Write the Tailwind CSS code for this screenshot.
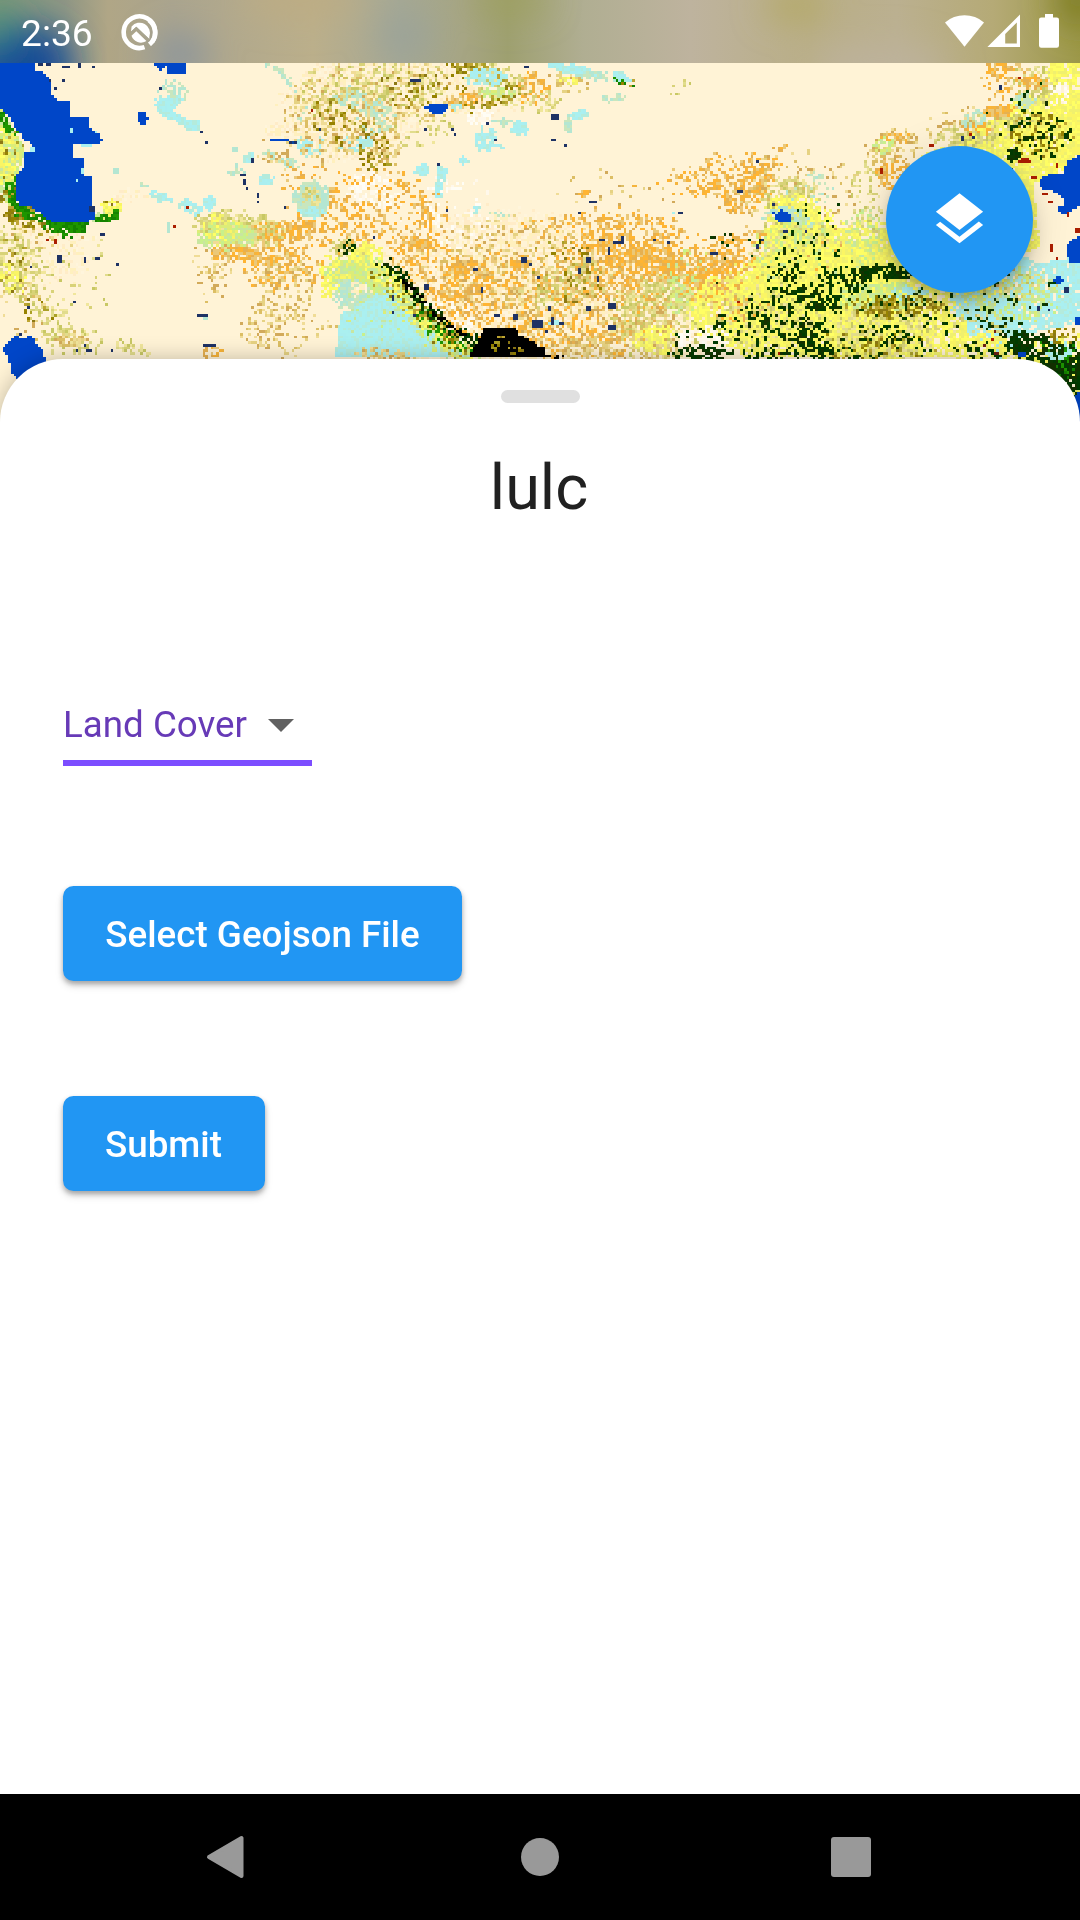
<!DOCTYPE html>
<html lang="en">
<head>
<meta charset="utf-8">
<title>lulc</title>
<script src="https://cdn.jsdelivr.net/npm/@tailwindcss/browser@4"></script>
</head>
<body class="relative h-[1920px] w-[1080px] overflow-hidden bg-white font-['Roboto',sans-serif]">
<canvas id="map" width="400" height="140" class="absolute left-0 top-[63px] h-[378px] w-[1080px] [image-rendering:pixelated]"></canvas>

<div class="relative flex h-full flex-col">
  <header class="relative flex h-[63px] shrink-0 items-center overflow-hidden bg-[#b8ad8c]">
    <svg class="absolute inset-0 h-full w-full" viewBox="0 0 1080 63" preserveAspectRatio="none">
      <defs>
        <linearGradient id="sky" x1="0" x2="1" y1="0" y2="0">
          <stop offset="0" stop-color="#7d9778"/><stop offset=".06" stop-color="#8f9784"/><stop offset=".1" stop-color="#b0a686"/><stop offset=".16" stop-color="#aaa48e"/><stop offset=".29" stop-color="#bbaf8b"/><stop offset=".37" stop-color="#a5a894"/><stop offset=".43" stop-color="#a6a583"/><stop offset=".47" stop-color="#9ea070"/><stop offset=".54" stop-color="#b0ae92"/><stop offset=".64" stop-color="#beb39e"/><stop offset=".75" stop-color="#b9ae86"/><stop offset=".83" stop-color="#bbb090"/><stop offset=".92" stop-color="#b5aa76"/><stop offset="1" stop-color="#9c9849"/>
        </linearGradient>
        <filter id="soft" x="-50%" y="-100%" width="200%" height="300%"><feGaussianBlur stdDeviation="17"/></filter>
      </defs>
      <rect width="1080" height="63" fill="url(#sky)"/>
      <g filter="url(#soft)">
        <ellipse cx="22" cy="64" rx="52" ry="40" fill="#124c96"/>
        <ellipse cx="0" cy="30" rx="14" ry="20" fill="#3b8c7c"/>
        <ellipse cx="180" cy="55" rx="28" ry="22" fill="#8c959b"/>
        <ellipse cx="405" cy="36" rx="25" ry="20" fill="#9aa29a"/>
        <ellipse cx="510" cy="0" rx="36" ry="14" fill="#9ea05e"/>
        <ellipse cx="795" cy="6" rx="30" ry="14" fill="#b3a862"/>
        <ellipse cx="880" cy="66" rx="70" ry="22" fill="#bdb29c"/>
        <ellipse cx="1078" cy="0" rx="22" ry="28" fill="#7d7c20"/>
        <ellipse cx="300" cy="0" rx="60" ry="16" fill="#bdac82"/>
      </g>
    </svg>
    <span class="relative ml-[21px] w-[100px] translate-y-[2px] text-[37.2px] leading-none text-white">2:36</span>
    <svg class="relative h-[38px] w-[38px]" viewBox="0 0 38 38" fill="none">
      <path d="M28.9 31.1A15.8 15.8 0 1 0 24.3 33.9" transform="rotate(3 19 19)" stroke="#fff" stroke-width="4.6"/>
      <path d="M31.1 28.9A15.8 15.8 0 0 0 28 7.2" stroke="#fff" stroke-width="4.6"/>
      <path d="M25.1 29.4l4.6 5.2" stroke="#a6a38e" stroke-width="2.2"/>
      <path d="M10.6 13.4A10.4 10.4 0 0 1 28.4 23.5L28.2 26 15.3 13.8 10 18.6z" fill="#fff"/>
      <path d="M10.5 22.7l4.8-4.5 10.1 9.9A10 10 0 0 1 10.5 22.7z" fill="#fff"/>
      <path d="M9.8 20l5.5-5.2L28.5 27.4" stroke="#a8a590" stroke-width="1.7"/>
    </svg>
    <svg class="relative ml-auto mr-[21px] h-[63px] w-[114px] shrink-0" viewBox="945 0 114 63" fill="#fff">
      <path d="M945 22.5a29.5 29.5 0 0 1 39 0L964.5 46.8z"/>
      <path fill-rule="evenodd" d="M987.4 47L1020 14.5V47zM1005.2 43.5H1016.8V22.5L1005.2 34z"/>
      <path d="M1045 14h8v3.5h3.8q2.2 0 2.2 2.2v25.8q0 2.3-2.2 2.3h-15.6q-2.2 0-2.2-2.3V19.7q0-2.2 2.2-2.2h3.8z"/>
    </svg>
  </header>

  <div class="flex h-[296px] shrink-0 justify-end pr-[47px] pt-[83px]">
    <button aria-label="Layers" class="flex h-[147px] w-[147px] items-center justify-center rounded-full bg-[#2196f3] shadow-[0_8px_13px_-3px_rgba(0,0,0,.2),0_16px_26px_rgba(0,0,0,.14),0_3px_40px_rgba(0,0,0,.12)]">
      <svg class="h-[63px] w-[63px]" viewBox="0 0 24 24" fill="#fff"><path d="M11.99 18.54l-7.37-5.73L3 14.07l9 7 9-7-1.63-1.27-7.38 5.74zM12 16l7.36-5.73L21 9l-9-7-9 7 1.63 1.27L12 16z"/></svg>
    </button>
  </div>

  <main class="flex min-h-0 flex-1 flex-col items-start rounded-t-[63px] bg-white px-[63px] pt-[31px] shadow-[0_0_21px_rgba(0,0,0,.25)]">
    <div class="h-[13px] w-[79px] self-center rounded-full bg-[#e0e0e0]"></div>
    <h1 class="mt-[48px] self-center pr-[2px] text-[63px] leading-[74px] text-[#212121]">lulc</h1>
    <div class="mt-[163px] flex h-[78px] w-[249px] items-center justify-between border-b-[6px] border-[#7c4dff] pr-[18px]">
      <span class="whitespace-nowrap text-[36.75px] leading-[43px] text-[#673ab7]">Land Cover</span>
      <svg class="mt-[2px] h-[13px] w-[26px]" viewBox="0 0 26 13"><path d="M0 0h26L13 13z" fill="#616161"/></svg>
    </div>
    <button class="mt-[120.4px] flex h-[94.5px] w-[399px] items-center justify-center whitespace-nowrap rounded-[10.5px] bg-[#2196f3] pt-[2px] text-[36.75px] font-medium text-white shadow-[0_3px_5px_rgba(0,0,0,.28),0_5px_9px_rgba(0,0,0,.12)]">Select Geojson File</button>
    <button class="mt-[115.5px] flex h-[94.5px] w-[202px] items-center justify-center rounded-[10.5px] bg-[#2196f3] pr-[1px] pt-[2px] text-[36.75px] font-medium text-white shadow-[0_3px_5px_rgba(0,0,0,.28),0_5px_9px_rgba(0,0,0,.12)]">Submit</button>
  </main>

  <nav class="flex h-[126px] shrink-0 items-center justify-between bg-black pl-[206px] pr-[209px]">
    <svg class="h-[44px] w-[38px]" viewBox="0 0 38 44"><path d="M3 22L35.5 3v38z" fill="#999" stroke="#999" stroke-width="4" stroke-linejoin="round"/></svg>
    <div class="ml-[4px] h-[38px] w-[38px] rounded-full bg-[#999]"></div>
    <div class="h-[40px] w-[40px] rounded-[3px] bg-[#999]"></div>
  </nav>
</div>

<script>
// Land cover raster: 400 cells across, map units are 8.1 per cell.
const W = 400, H = 140, U = 8.1, TOP = 39;
const ctx = document.getElementById('map').getContext('2d');
let seed = 71;
const rnd = () => { seed = (seed * 1664525 + 1013904223) >>> 0; return seed / 4294967296; };
const C = {
  sand: ['#fff3d6'], pale: ['#fff0be', '#fff5dc', '#ffecc8'],
  or: ['#ffb432', '#f5b43c', '#e6b050', '#ebc878'], tan: ['#dcbe64', '#d2aa5a', '#e6d282', '#f0dc96'],
  kh: ['#c8c864', '#d8d278', '#e1dc8c', '#f0e69b'], ol: ['#968200', '#8c7814', '#aaa028', '#bea532'],
  ye: ['#ffff64', '#faf564', '#f0f06e'], lg: ['#c8f08c', '#c8e6a0', '#dcec78'],
  cy: ['#aaf0f0', '#aaeef0', '#b4ebdc'], cg: ['#b4e6d2', '#c8e6be'],
  dg: ['#003c00', '#0a3c00', '#143200'], gr: ['#1e9600', '#148200'],
  bl: ['#0046c8'], nv: ['#1e3264', '#28324b', '#0a46a0'], bk: ['#000000'],
  rd: ['#aa1e00', '#6e1e14'], wh: ['#fffdf5', '#fff8eb']
};
// Cover classes that stay sparse
const THIN = { or: .78, tan: .75, kh: .8, dg: .68, ol: .75 };
const put = (x, y, p) => { ctx.fillStyle = p[rnd() * p.length | 0]; ctx.fillRect(x, y, 1, 1); };
const gx = x => x / U, gy = y => (y - TOP) / U;
// Scatter cells inside a rotated ellipse, thinning out towards the rim.
function spray(p, x, y, rx, ry, d, rot = 0) {
  const cx = gx(x), cy = gy(y), a = rx / U, b = ry / U, m = Math.max(a, b);
  const c = Math.cos(rot * Math.PI / 180), s = Math.sin(rot * Math.PI / 180);
  const k = d < .75 ? (THIN[p] || 1) : 1;
  for (let j = Math.max(0, cy - m | 0); j < Math.min(H, cy + m + 1); j++)
    for (let i = Math.max(0, cx - m | 0); i < Math.min(W, cx + m + 1); i++) {
      const dx = i + .5 - cx, dy = j + .5 - cy;
      const r = ((dx * c + dy * s) / a) ** 2 + ((dy * c - dx * s) / b) ** 2;
      if (r >= 1) continue;
      if (rnd() < k * d * Math.min(1, (1 - r) * 1.8)) {
        put(i, j, C[p]);
        if (d < .9 && rnd() < .25) rnd() < .5 ? put(i + 1, j, C[p]) : put(i, j + 1, C[p]);
      }
    }
}
function poly(p, pts, d = 1) {
  const q = pts.trim().split(/\s+/).map(t => t.split(',').map(Number)).map(([x, y]) => [gx(x), gy(y)]);
  const ys = q.map(t => t[1]), y0 = Math.max(0, Math.min(...ys) | 0), y1 = Math.min(H, Math.max(...ys) + 1);
  for (let j = y0; j < y1; j++) for (let i = 0; i < W; i++) {
    let inside = false; const x = i + .5, y = j + .5;
    for (let k = 0, l = q.length - 1; k < q.length; l = k++)
      if ((q[k][1] > y) !== (q[l][1] > y) && x < (q[l][0] - q[k][0]) * (y - q[k][1]) / (q[l][1] - q[k][1]) + q[k][0]) inside = !inside;
    if (inside && rnd() < d) put(i, j, C[p]);
  }
}
function line(p, pts, w, d = 1) {
  const q = pts.trim().split(/\s+/).map(t => t.split(',').map(Number));
  for (let k = 1; k < q.length; k++) {
    const [a, b] = q[k - 1], [c, e] = q[k], n = Math.max(1, Math.hypot(c - a, e - b) / 6 | 0);
    for (let t = 0; t <= n; t++) for (let v = 0; v < w; v++)
      if (rnd() < d) put(gx(a + (c - a) * t / n) + (rnd() - .5) * w | 0, gy(b + (e - b) * t / n) + (rnd() - .5) * w | 0, C[p]);
  }
}
// dots: "x,y,w,h" in map units
const dots = (p, s) => s.trim().split(/\s+/).forEach(t => {
  const [x, y, w = 8, h = 8] = t.split(',').map(Number);
  ctx.fillStyle = C[p][0];
  ctx.fillRect(Math.round(gx(x)), Math.round(gy(y)), Math.max(1, Math.round(w / U)), Math.max(1, Math.round(h / U)));
});

ctx.fillStyle = '#fff3d6'; ctx.fillRect(0, 0, W, H);

// West: shores and hills south of the lake
poly('lg', '0,170 30,220 60,270 75,300 60,350 45,400 50,470 30,480 0,420', .95);
poly('ye', '0,230 50,250 60,340 30,400 0,400', .55);
spray('ol', 25, 440, 50, 90, .45, -20); spray('ol', 30, 260, 50, 80, .2);
spray('ol', 90, 510, 90, 45, .74, 15); spray('tan', 130, 565, 130, 40, .35); spray('pale', 150, 600, 170, 120, .3);
spray('kh', 50, 640, 90, 130, .5, -20); spray('ye', 40, 680, 60, 60, .35); spray('ol', 40, 640, 80, 90, .12);
spray('kh', 130, 770, 60, 180, .3, -38); spray('kh', 220, 870, 100, 50, .4); spray('tan', 215, 865, 50, 30, .7);
spray('ol', 120, 780, 60, 60, .14); spray('kh', 400, 895, 60, 25, .45, 20); spray('tan', 60, 780, 120, 120, .1);
spray('kh', 240, 690, 120, 150, .05);
line('gr', '0,185 20,230 40,250', 3, .9); line('gr', '30,400 45,450 70,490 120,490 160,530 200,545', 4, .95);
poly('gr', '160,520 270,515 290,500 330,485 350,485 335,515 265,520 255,550 215,552 200,535 160,530');
spray('ye', 335, 475, 36, 32, .95); spray('lg', 300, 500, 40, 18, .6, -30); spray('ol', 330, 460, 40, 20, .3); spray('pale', 385, 440, 50, 30, .3);
line('gr', '300,510 340,500 350,488', 3, .8);
poly('bl', '0,39 100,39 108,60 135,70 150,95 150,125 175,150 212,155 212,205 222,205 222,197 270,197 270,235 300,250 305,270 290,285 260,280 222,285 222,325 250,325 250,375 272,380 272,470 285,490 280,510 240,520 160,520 120,490 95,470 60,465 48,440 48,375 70,350 75,310 100,308 95,285 75,270 50,240 30,205 0,175');
dots('cy', '212,230,8,16 90,292,20,16 228,387 240,355,8,16 285,240,8,8 245,285,30,8');
poly('bl', '5,900 25,880 35,862 55,858 60,868 75,868 78,858 100,858 105,880 125,895 135,925 135,960 50,990 35,965 25,920');
poly('bl', '465,39 558,39 555,68 505,72 500,48 485,60 468,58'); poly('bl', '412,185 436,185 443,205 436,222 418,222 410,205');
dots('nv', '110,41,16 138,41,20,12 190,47,26 236,39,8,16 276,47 190,87 165,111 145,91 300,552,16 172,615,16,26 250,625,12,14 285,625,18,12 348,640 88,645 270,465,16,14 222,748 85,770,12 225,900 255,880,10,10 260,897,16 330,897 474,110 600,244 616,276 605,880,38,10 592,790,30 55,845 595,480 755,322,10,16 717,372,16 725,388,8,16 735,410 768,430,8,16 772,455 850,465,10,12 955,235');
dots('rd', '520,527,10,10 560,465,10,14 140,562,10 160,565,8,14 930,175');
poly('nv', '812,262 865,262 865,273 895,273 895,255 920,252 918,265 900,270 885,288 865,280 858,273 812,273'); poly('bl', '812,262 865,262 865,273 812,273');

// Steppe streams and salt flats
poly('cy', '467,160 500,140 545,135 550,150 525,165 520,185 560,205 598,208 598,240 570,245 530,215 500,205 470,185');
spray('cg', 520, 120, 55, 35, .4); spray('cy', 500, 155, 40, 25, .5);
line('cg', '800,45 840,65 870,100 900,130 912,170 900,210 905,240', 2, .85);
spray('cy', 930, 282, 42, 42, 1.4); spray('cy', 1060, 280, 60, 32, 1.3, -15); spray('cg', 850, 330, 65, 20, .7, 20);
spray('cy', 745, 325, 28, 18, .9, -25); spray('cg', 710, 362, 30, 25, .5); spray('cy', 798, 388, 30, 22, .9);
spray('cy', 480, 440, 40, 20, .8, 20); spray('cg', 425, 402, 25, 12, .5, 25); spray('cy', 570, 470, 45, 22, .8, 20); spray('cy', 630, 455, 25, 28, .95);
dots('cg', '693,292,16,14 340,355,14,16 500,515,8,30 605,800,20,10');

// Northern hills
spray('pale', 1050, 180, 230, 170, .6); spray('pale', 1300, 110, 330, 110, .5);
spray('tan', 1000, 190, 150, 160, .36); spray('kh', 1000, 130, 130, 90, .28); spray('ol', 1010, 210, 100, 80, .14);
spray('cg', 1050, 140, 50, 40, .6); spray('pale', 850, 245, 80, 25, .5); spray('tan', 850, 310, 100, 60, .15);
spray('tan', 1200, 130, 200, 100, .3); spray('kh', 1180, 100, 190, 80, .35);
spray('ol', 1280, 120, 170, 70, .18); spray('kh', 1500, 100, 130, 60, .5, 25); line('ol', '1350,45 1480,70 1560,120', 4, .4);
spray('or', 1390, 150, 60, 26, .8, -10); spray('or', 1600, 120, 60, 60, .5); spray('kh', 1640, 150, 50, 40, .45);
spray('ol', 1480, 150, 110, 25, .4, -10); spray('tan', 1700, 95, 90, 35, .4, 10); spray('ye', 1710, 90, 40, 15, .5);
spray('ol', 1400, 45, 80, 16, .4);
spray('cy', 1460, 80, 70, 30, .7); spray('lg', 1490, 130, 60, 22, .7); spray('cy', 1720, 60, 95, 18, 1, 12); spray('cg', 1780, 75, 60, 16, .6);
poly('cy', '1835,65 1870,65 1895,95 1860,98 1838,90'); line('gr', '1840,92 1895,100', 2, .6); line('ol', '1860,95 1895,100', 2, .6);
spray('ol', 1120, 290, 60, 90, .5); spray('tan', 1150, 280, 60, 90, .45); spray('cg', 1120, 200, 70, 60, .4); spray('cy', 1095, 278, 30, 20, .9);
spray('kh', 1270, 240, 110, 80, .15); spray('wh', 1440, 200, 50, 28, .7); spray('cg', 1840, 145, 45, 16, .5); spray('kh', 2040, 115, 40, 35, .25);
poly('bl', '1270,175 1290,160 1345,158 1348,172 1335,185 1305,197 1285,180'); spray('cy', 1370, 170, 20, 14, .8);
spray('cy', 1455, 265, 40, 40, .7, 40); spray('cy', 1560, 235, 28, 28, 1); line('cy', '1440,290 1510,290', 1, .8); spray('cg', 1510, 215, 35, 14, .7);
spray('cy', 1740, 195, 38, 16, .9); spray('cg', 1705, 225, 16, 30, .9);
spray('cy', 1265, 360, 24, 22, 1.3); spray('cy', 1390, 332, 18, 14, 1.2); poly('cy', '1315,350 1350,352 1330,400 1325,445 1302,445 1302,405 1315,390');
spray('cy', 1425, 480, 18, 18, 1); spray('cg', 1500, 492, 35, 12, .6);

// Central plateau
spray('or', 780, 600, 150, 50, .4, 10); spray('or', 850, 660, 150, 65, .42); spray('kh', 720, 530, 150, 55, .8, 8);
spray('lg', 680, 560, 100, 48, .9); spray('ye', 660, 530, 60, 50, .35); spray('or', 700, 610, 80, 30, .75);
spray('or', 860, 540, 130, 40, .55); spray('tan', 850, 720, 100, 120, .3); spray('tan', 640, 650, 80, 120, .2); spray('tan', 780, 830, 70, 70, .4);
spray('or', 1000, 520, 170, 100, .36); spray('or', 960, 400, 150, 70, .25); spray('tan', 900, 860, 150, 80, .17); spray('or', 640, 905, 40, 20, .6);
spray('cg', 935, 445, 62, 58, 1.2); spray('kh', 935, 440, 32, 34, .7); spray('cy', 930, 485, 45, 16, .7);
spray('pale', 1500, 740, 450, 280, .9); spray('or', 1190, 480, 190, 130, .3, 25); spray('or', 1160, 400, 80, 50, .3);
spray('or', 1330, 680, 220, 120, .32, 40); spray('or', 1480, 770, 240, 150, .3); spray('or', 1560, 660, 240, 120, .15);
spray('tan', 1550, 640, 320, 160, .22); spray('or', 1750, 860, 260, 80, .42); spray('or', 1720, 530, 170, 45, .3); spray('or', 1850, 700, 220, 210, .2);
spray('or', 1390, 655, 55, 28, .8); spray('or', 1560, 640, 45, 24, .8, -25); spray('or', 1360, 760, 28, 70, .6); spray('or', 1260, 585, 50, 22, .75, 20); spray('or', 1275, 470, 18, 80, .7, -15);
spray('ol', 1700, 670, 130, 120, .16); spray('kh', 1700, 700, 170, 70, .3, -20); spray('tan', 1750, 780, 230, 180, .2);
spray('wh', 1340, 500, 180, 130, .1); spray('wh', 1110, 420, 90, 60, .4); spray('wh', 1330, 820, 120, 90, .2);
spray('or', 1930, 570, 240, 95, .42, 12); spray('or', 1950, 680, 170, 130, .6); spray('or', 1820, 600, 30, 60, .74, -20); spray('or', 1990, 640, 80, 60, .6);
spray('or', 2070, 400, 190, 60, .12); spray('or', 2100, 400, 100, 30, .4, 25); spray('tan', 1850, 420, 200, 80, .06); spray('or', 1760, 432, 32, 14, .7);
spray('kh', 1990, 800, 170, 140, .7); spray('tan', 1980, 850, 140, 100, .4); spray('lg', 2080, 700, 100, 120, .3); spray('or', 2140, 690, 110, 90, .5); spray('ye', 1970, 870, 80, 50, .6); spray('ye', 2130, 720, 50, 50, .9);
dots('nv', '1235,87,30,10 1570,47,14 1455,215,8 1485,262,12,12 1360,250,8 1350,230 1655,195,28,14 1650,262,14,12 1695,285 1315,340 1275,237 1340,480 1275,702,16,20 1420,655,20,10 1445,710,8,16 1565,625,16,14 1590,640 1612,680 1645,765,8,14 1755,622,16,18 1765,455,24,10 1735,488 1788,680,10,20 1755,770,18,18 1595,810,30,22 1650,800,8,24 1680,815,16 1820,825,26,18 1825,760,26,16 1835,570,30,10 1800,567,20 1820,590,12,22 2030,487,16,10 1535,795,14,16 1485,790,20 1735,655,10,20 1810,930,40 1640,840 1860,560,8,20 1960,565');
dots('cy', '1662,810,14,20 1645,820 2020,482');

// Mountain arc and plain
spray('kh', 1060, 600, 90, 50, .5); spray('ye', 1095, 630, 70, 60, .8, 35); spray('lg', 1070, 690, 110, 60, 1, 20); spray('ye', 1000, 670, 60, 60, .45);
spray('cg', 1050, 730, 70, 50, .9); spray('pale', 1080, 710, 40, 25, .6); spray('ye', 980, 720, 25, 30, .6);
poly('cy', '1010,880 1020,790 1050,780 1110,745 1160,710 1215,735 1280,810 1340,870 1420,925 1000,925');
spray('lg', 1120, 820, 100, 90, .07); line('tan', '1080,905 1200,918 1230,925', 4, .7);
line('lg', '1100,650 1180,710 1260,800 1330,865 1410,915', 9, .9);
line('ye', '1100,640 1170,690 1260,800 1350,880 1410,925', 6, .45);
line('dg', '1140,640 1200,675 1240,725 1300,790 1360,845 1430,880', 5, .42);
line('gr', '1250,780 1320,855 1390,900', 6, .25); line('dg', '1010,605 1070,580', 4, .4); line('bk', '1210,700 1240,720 1300,790 1400,860', 2, .5);
line('ol', '1120,680 1270,800 1390,910', 7, .15);
poly('bk', '1405,925 1420,890 1440,865 1450,835 1550,835 1560,855 1590,870 1620,890 1635,893 1640,925');
poly('ol', '1480,870 1500,880 1495,905 1475,900', .6); poly('ol', '1525,875 1545,880 1580,905 1520,915', .45); line('ol', '1485,855 1510,860', 1, .7);
line('bk', '1640,922 1690,922', 1); line('tan', '1700,890 1850,920', 9, .5);
dots('nv', '1175,732,10 1175,747,8 1178,785,10 1240,795 1120,560');

// Eastern farmland
spray('or', 2210, 400, 150, 80, .42, 25); spray('or', 2220, 440, 90, 50, .5, -30); spray('or', 2260, 370, 70, 70, .4);
spray('tan', 2400, 440, 220, 150, .14); spray('cg', 2440, 420, 90, 60, .16); spray('or', 2330, 320, 60, 30, .25, -40);
spray('or', 2250, 600, 140, 80, .45); spray('or', 2200, 680, 140, 80, .6); spray('kh', 2370, 440, 100, 70, .55);
spray('ye', 2400, 570, 130, 130, 1); spray('ye', 2380, 480, 100, 50, .7);
spray('ye', 2600, 590, 160, 90, .7); spray('ye', 2480, 740, 340, 170, 1);
spray('kh', 2380, 600, 150, 130, .3); spray('or', 2470, 620, 90, 70, .18); spray('lg', 2390, 600, 150, 130, .2);
poly('ye', '2160,740 2250,650 2360,600 2700,560 2900,730 2900,925 2230,925 2170,850', .75);
poly('ye', '2760,320 2870,270 2960,220 3060,140 3240,120 3240,340 3100,400 3120,590 2980,650 2860,740 2680,500', .94);
spray('or', 2680, 370, 60, 65, .74); spray('tan', 2670, 290, 100, 60, .4, -15); spray('or', 2690, 265, 50, 20, .7); spray('lg', 2650, 290, 40, 40, .4);
spray('kh', 2950, 240, 170, 50, .6, -10); spray('or', 2990, 185, 55, 22, 1.1); spray('cg', 2920, 210, 50, 30, .7, -20); spray('or', 2930, 235, 50, 22, .5); spray('tan', 2850, 210, 90, 40, .25, -20);
spray('or', 3030, 100, 110, 80, .24); spray('or', 2990, 60, 50, 40, .5); spray('kh', 3110, 100, 80, 70, .55); spray('ye', 3200, 60, 70, 60, .85); spray('or', 3110, 100, 40, 30, .6); spray('cg', 3070, 150, 40, 30, .8);
spray('wh', 3180, 130, 40, 40, .3); spray('dg', 3120, 250, 110, 80, .2); spray('ol', 3120, 250, 110, 80, .25); spray('dg', 3150, 240, 50, 40, .2); spray('dg', 3040, 310, 20, 32, .85); spray('dg', 3050, 250, 190, 190, .03);
spray('lg', 2590, 560, 70, 100, .3); spray('kh', 2600, 450, 60, 120, .25);

// Forest belt
spray('pale', 2090, 850, 90, 90, .5); spray('ye', 2200, 790, 150, 110, .7); spray('or', 2200, 760, 120, 70, .25); spray('wh', 2140, 880, 50, 70, .5);
spray('lg', 2640, 740, 160, 50, .6); spray('cy', 2720, 730, 70, 30, .6); spray('kh', 2300, 800, 180, 110, .3);
spray('dg', 2430, 620, 160, 80, .14); spray('dg', 2490, 715, 140, 60, .5, -20); spray('dg', 2660, 665, 115, 26, .8); spray('dg', 2370, 780, 170, 80, .32);
spray('dg', 2450, 870, 90, 50, .5); spray('dg', 2450, 875, 50, 24, .7); spray('dg', 2300, 850, 180, 80, .22); spray('dg', 2350, 915, 260, 22, .42);
spray('kh', 2640, 850, 180, 90, .95); spray('ye', 2620, 860, 190, 90, .5); spray('ol', 2680, 770, 170, 36, .7); spray('ol', 2620, 890, 200, 60, .24); spray('dg', 2740, 800, 200, 110, .16); spray('dg', 2350, 680, 80, 60, .3); spray('dg', 2620, 890, 180, 50, .13);
spray('dg', 2090, 910, 100, 32, .6); spray('dg', 2050, 870, 30, 30, .4); spray('dg', 2150, 830, 80, 60, .14); spray('dg', 2200, 640, 150, 130, .03); spray('dg', 2450, 520, 140, 80, .05); spray('wh', 2060, 865, 30, 25, .8);

// Coast
poly('cy', '2870,740 2920,660 3040,610 3120,640 3240,620 3240,820 3080,850 3000,930 2900,850 2900,810', .9);
spray('cy', 2950, 770, 120, 70, .7, 25); spray('ye', 2900, 690, 130, 60, .55); spray('kh', 3040, 700, 150, 50, .32); spray('lg', 3020, 730, 180, 100, .3); spray('kh', 2950, 840, 120, 60, .25); spray('tan', 2960, 670, 90, 50, .2);
spray('dg', 2990, 820, 120, 40, .26, 20); spray('dg', 3060, 710, 170, 80, .05); spray('ye', 2950, 890, 120, 50, .7); spray('dg', 2960, 900, 120, 30, .35); spray('rd', 3000, 880, 120, 60, .04);
poly('ye', '2980,900 3240,850 3240,1100 3150,1050', .5);
spray('dg', 3130, 910, 140, 65, .74, 20); spray('dg', 3200, 980, 100, 110, .8); spray('dg', 3080, 880, 60, 40, .5); spray('gr', 3160, 930, 100, 70, .12); spray('ol', 3190, 860, 60, 30, .5); spray('ye', 3200, 1040, 30, 20, .6); spray('cy', 3180, 900, 60, 40, .2);
poly('bl', '3195,350 3205,330 3240,315 3240,470 3215,480 3205,495 3185,490 3170,475 3195,465 3190,445 3175,430 3155,420 3135,418 3120,415 3120,385 3140,375 3190,375');
spray('bl', 2970, 394, 1, 1, 1);
poly('bl', '2960,385 3000,372 3050,372 3062,350 3080,325 3120,318 3240,318 3240,470 3190,470 3190,420 2980,420', 0);
poly('bl', '3240,555 3205,580 3195,605 3210,635 3240,640'); poly('bl', '3200,1060 3240,1020 3240,1130 3215,1130');
dots('bl', '3055,905,26,18 3165,680,16,24 3155,690,36,10 3225,800,16,26'); dots('nv', '3190,710,14,20 2920,260,10,12 2000,570 2265,580,10,20 2885,260,10,14 3000,100,10,16 3110,765,8,16 3145,775');
poly('bl', '2320,488 2345,480 2370,490 2370,515 2330,515 2322,500'); line('cg', '2290,500 2320,485 2350,475 2380,500', 2, .6); line('cg', '2390,490 2420,520', 5, .7);
dots('rd', '3065,320,22,18 3055,328,40,8 3125,430,16,12 3145,452,16,8 3200,485,8,16 3225,530,18,14 3150,580,10,26 2640,355,10,16 2210,755,8 2330,905 2905,250 2790,285,16 3170,620,10,12 3165,340,8,20 3095,380,20 3050,80');
dots('nv', '2210,420,16 2270,330 2320,460 2350,540,14 2410,540,12 2285,565,12,10 2130,610,16 2150,605,10');
</script>
</body>
</html>
